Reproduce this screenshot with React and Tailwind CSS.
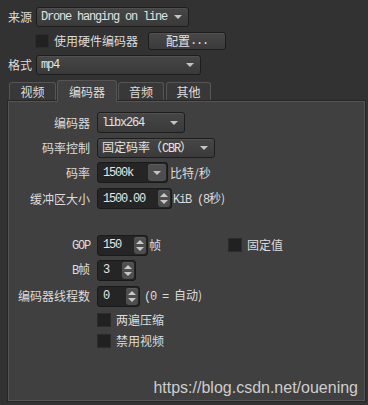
import React from "react";

const CJK = "font-['Noto_Sans_CJK_SC','Noto_Sans',sans-serif]";
const MONO = "font-['Liberation_Mono','Noto_Sans_CJK_SC',monospace] text-[12px] tracking-[-1.2px]";

function DownTri() {
  return (
    <svg width="8" height="4" viewBox="0 0 8 4" className="shrink-0">
      <polygon points="0,0 8,0 4,4" fill="#c4c4c4" />
    </svg>
  );
}

function Combo({ className, children }) {
  return (
    <div
      className={`flex items-center justify-between rounded-[3px] border border-[#1d1d1d] bg-gradient-to-b from-[#464646] to-[#3a3a3a] shadow-[inset_0_1px_0_#505050] pl-[4px] pr-[6px] text-[#e4e4e4] ${className}`}
    >
      <div className="whitespace-nowrap leading-[14px]">{children}</div>
      <DownTri />
    </div>
  );
}

function SpinBtns() {
  return (
    <div className="flex h-[17px] w-[12px] flex-col items-center justify-center gap-[3px] rounded-[3px] bg-[#4e4e4e] shadow-[inset_0_1px_0_#5c5c5c]">
      <svg width="8" height="4" viewBox="0 0 8 4">
        <polygon points="0,4 8,4 4,0" fill="#c8c8c8" />
      </svg>
      <svg width="8" height="4" viewBox="0 0 8 4">
        <polygon points="0,0 8,0 4,4" fill="#c8c8c8" />
      </svg>
    </div>
  );
}

function Spin({ className, value }) {
  return (
    <div
      className={`flex h-[21px] items-center justify-between rounded-[3px] border border-[#1a1a1a] bg-[#252525] pl-[5px] pr-[1px] text-[#e6e6e6] ${className}`}
    >
      <span className={`${MONO} leading-[14px]`}>{value}</span>
      <SpinBtns />
    </div>
  );
}

function CheckBox() {
  return <div className="h-[14px] w-[14px] shrink-0 border border-[#2c2c2c] bg-[#212121]" />;
}

function Label({ children }) {
  return (
    <div className={`w-[81px] shrink-0 text-right text-[12px] leading-[14px] text-[#dcdcdc] ${CJK}`}>{children}</div>
  );
}

function Tab({ className, children, selected }) {
  return (
    <div
      className={`flex items-center justify-center rounded-t-[3px] border border-b-0 border-[#555555] text-[12px] leading-[14px] text-[#dedede] ${CJK} ${
        selected ? "relative z-10 -mb-[1px] h-[22px] bg-[#404040]" : "h-[19px] bg-[#383838]"
      } ${className}`}
    >
      {children}
    </div>
  );
}

export default function App() {
  return (
    <div className={`relative flex h-[405px] w-[368px] flex-col overflow-hidden bg-[#323232] pl-[8px] pt-[7px] ${CJK}`}>
      {/* 来源 */}
      <div className="flex h-[20px] items-center">
        <div className="w-[28px] text-[12px] leading-[14px] text-[#dcdcdc]">来源</div>
        <Combo className={`h-[20px] w-[153px] ${MONO}`}>Drone hanging on line</Combo>
      </div>

      {/* 硬件编码器 */}
      <div className="mt-[5px] flex h-[18px] items-center pl-[27px]">
        <CheckBox />
        <div className="ml-[5px] w-[84px] text-[12px] leading-[14px] text-[#dcdcdc]">使用硬件编码器</div>
        <div className="ml-[10px] flex h-[18px] w-[78px] items-center justify-center rounded-[3px] border border-[#1d1d1d] bg-gradient-to-b from-[#474747] to-[#3b3b3b] shadow-[inset_0_1px_0_#525252] text-[12px] leading-[14px] text-[#e0e0e0]">
          配置<span className={MONO}>...</span>
        </div>
      </div>

      {/* 格式 */}
      <div className="mt-[5px] flex h-[20px] items-center">
        <div className="w-[28px] text-[12px] leading-[14px] text-[#dcdcdc]">格式</div>
        <Combo className={`h-[20px] w-[165px] ${MONO}`}>mp4</Combo>
      </div>

      {/* tabs */}
      <div className="mt-[5px] flex h-[21px] items-end gap-[1px] pl-[1px]">
        <Tab className="w-[47px]">视频</Tab>
        <Tab className="w-[60px]" selected>
          编码器
        </Tab>
        <Tab className="w-[46px]">音频</Tab>
        <Tab className="ml-[1px] w-[45px]">其他</Tab>
      </div>

      {/* panel */}
      <div className="mr-[3px] flex h-[300px] flex-col border border-[#555555] bg-[#404040] pt-[10px] shadow-[0_0_0_1px_#262626]">
        <div className="flex h-[21px] items-center gap-[7px]">
          <Label>编码器</Label>
          <Combo className={`h-[21px] w-[88px] ${MONO}`}>libx264</Combo>
        </div>
        <div className="mt-[5px] flex h-[20px] items-center gap-[7px]">
          <Label>码率控制</Label>
          <Combo className={`h-[20px] w-[118px] text-[12px] ${CJK}`}>
            固定码率（<span className={MONO}>CBR</span>）
          </Combo>
        </div>
        <div className="mt-[4px] flex h-[21px] items-center gap-[7px]">
          <Label>码率</Label>
          <div className="flex h-[21px] w-[71px] items-center justify-between rounded-[3px] border border-[#1a1a1a] bg-[#252525] pl-[5px] pr-[1px] text-[#e6e6e6]">
            <span className={`${MONO} leading-[14px]`}>1500k</span>
            <div className="flex h-[17px] w-[18px] items-center justify-center rounded-[3px] bg-[#4e4e4e] shadow-[inset_0_1px_0_#5c5c5c]">
              <DownTri />
            </div>
          </div>
          <div className="-ml-[5px] text-[12px] leading-[14px] text-[#dcdcdc]">比特/秒</div>
        </div>
        <div className="mt-[5px] flex h-[21px] items-center gap-[7px]">
          <Label>缓冲区大小</Label>
          <Spin className="w-[75px]" value="1500.00" />
          <div className="-ml-[6px] whitespace-nowrap text-[12px] leading-[14px] text-[#dcdcdc]">
            <span className={MONO}>KiB (8</span>秒)
          </div>
        </div>

        <div className="mt-[26px] flex h-[20px] items-center gap-[7px]">
          <Label>
            <span className={MONO}>GOP</span>
          </Label>
          <Spin className="h-[20px] w-[51px]" value="150" />
          <div className="-ml-[6px] text-[12px] leading-[14px] text-[#dcdcdc]">帧</div>
          <div className="ml-[60px] flex items-center gap-[5px]">
            <CheckBox />
            <div className="text-[12px] leading-[14px] text-[#dcdcdc]">固定值</div>
          </div>
        </div>
        <div className="mt-[5px] flex h-[20px] items-center gap-[7px]">
          <Label>
            <span className={MONO}>B</span>帧
          </Label>
          <Spin className="h-[20px] w-[39px]" value="3" />
        </div>
        <div className="mt-[6px] flex h-[20px] items-center gap-[7px]">
          <Label>编码器线程数</Label>
          <Spin className="h-[20px] w-[43px]" value="0" />
          <div className="-ml-[3px] whitespace-nowrap text-[12px] leading-[14px] text-[#dcdcdc]">
            <span className={MONO}>(0 = </span>自动)
          </div>
        </div>
        <div className="mt-[7px] flex h-[14px] items-center pl-[88px]">
          <CheckBox />
          <div className="ml-[5px] text-[12px] leading-[14px] text-[#dcdcdc]">两遍压缩</div>
        </div>
        <div className="mt-[7px] flex h-[14px] items-center pl-[88px]">
          <CheckBox />
          <div className="ml-[5px] text-[12px] leading-[14px] text-[#dcdcdc]">禁用视频</div>
        </div>
      </div>

      <div className="absolute bottom-[9px] right-[10px] font-['Liberation_Sans',Arial,sans-serif] text-[16px] leading-none text-[#cdcdcd]">
        https://blog.csdn.net/ouening
      </div>
    </div>
  );
}
